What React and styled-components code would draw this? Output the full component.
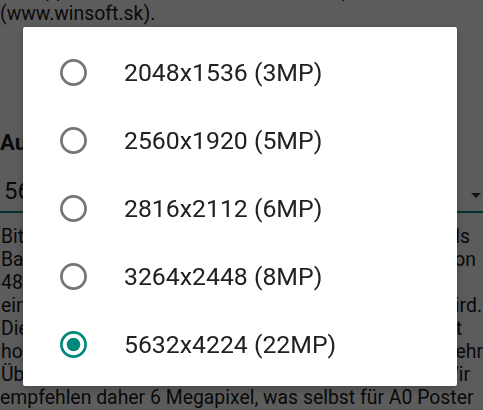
import React from "react";
import styled, { createGlobalStyle } from "styled-components";

const GlobalStyle = createGlobalStyle`
  html {
    overflow: hidden;
  }
  html, body {
    margin: 0;
    padding: 0;
    background: #ffffff;
  }
  body {
    font-family: Roboto, "Noto Sans", Arial, sans-serif;
  }
`;

const Page = styled.div`
  width: 483px;
  margin-top: -21px;
  color: #1a1a1a;
`;

const TextLine = styled.div`
  display: flex;
  font-size: 19.4px;
  line-height: 23px;
  white-space: nowrap;
  overflow: hidden;
  padding-left: ${(p) => p.$left || 0}px;
`;

const LineEnd = styled.span`
  margin-left: auto;
  padding-right: ${(p) => p.$right || 0}px;
`;

const Heading = styled.h2`
  margin: 104px 0 0;
  font-size: 22px;
  font-weight: 700;
  line-height: 28px;
  white-space: nowrap;
`;

const Spinner = styled.div`
  display: flex;
  align-items: center;
  height: 40px;
  margin-top: 14px;
  padding-left: 4px;
  font-size: 24px;
  border-bottom: 2px solid #00897b;
`;

const Arrow = styled.span`
  margin-left: auto;
  margin-right: 2px;
  margin-top: 8px;
  width: 0;
  height: 0;
  border-left: 5px solid transparent;
  border-right: 5px solid transparent;
  border-top: 5px solid #333;
`;

const Body = styled.div`
  margin-top: 12px;
`;

const Scrim = styled.div`
  position: fixed;
  inset: 0;
  background: rgba(0, 0, 0, 0.64);
  display: flex;
  align-items: flex-start;
  padding: 27px 0 0 23px;
`;

const Dialog = styled.div`
  width: 434px;
  height: 359px;
  box-sizing: border-box;
  padding-top: 11px;
  background: #ffffff;
  border-radius: 2px;
  box-shadow: 0 3px 8px rgba(0, 0, 0, 0.25);
`;

const Option = styled.div`
  display: flex;
  align-items: center;
  height: 68px;
  padding-left: 37px;
  gap: 37px;
  font-size: 24.8px;
  color: #212121;
`;

const RadioIcon = ({ checked }) => (
  <svg width="27" height="27" viewBox="0 0 27 27">
    <circle
      cx="13.5"
      cy="13.5"
      r="12.1"
      fill="none"
      stroke={checked ? "#00897b" : "#757575"}
      strokeWidth="2.7"
    />
    {checked && <circle cx="13.5" cy="13.5" r="6.8" fill="#00897b" />}
  </svg>
);

const options = [
  "2048x1536 (3MP)",
  "2560x1920 (5MP)",
  "2816x2112 (6MP)",
  "3264x2448 (8MP)",
  "5632x4224 (22MP)",
];

const bodyLines = [
  ["Bitte wählen Sie die gewünschte Auflösung. Als", "Als", 13],
  ["Basis dient die maximale Kameraauflösung von", "von", 7],
  ["48 Megapixel.", "", 0],
  ["ein Bild mit dieser Auflösung sehr groß wird.", "wird.", 1],
  ["Diese Auflösung ist jedoch nur bei Bildern mit", "mit", 21],
  ["hoher Qualität sinnvoll und benötigt sehr", "sehr", 0],
  ["Überdies dauert die Verarbeitung länger. Wir", "Wir", 13],
];

export default function App() {
  return (
    <>
      <GlobalStyle />
      <Page>
        <TextLine>Die App wurde entwickelt von WinSoft spol. s r.o. und Kopp</TextLine>
        <TextLine>(www.winsoft.sk).</TextLine>
        <Heading>Auflösung</Heading>
        <Spinner>
          5632x4224 (22MP)
          <Arrow />
        </Spinner>
        <Body>
          {bodyLines.map(([text, end, right], i) => (
            <TextLine key={i} $left={1}>
              <span>{text.slice(0, 6)}</span>
              {end && <LineEnd $right={right}>{end}</LineEnd>}
            </TextLine>
          ))}
          <TextLine>empfehlen daher 6 Megapixel, was selbst für A0 Poster</TextLine>
        </Body>
      </Page>
      <Scrim>
        <Dialog>
          {options.map((label, i) => (
            <Option key={label}>
              <RadioIcon checked={i === options.length - 1} />
              <span>{label}</span>
            </Option>
          ))}
        </Dialog>
      </Scrim>
    </>
  );
}
